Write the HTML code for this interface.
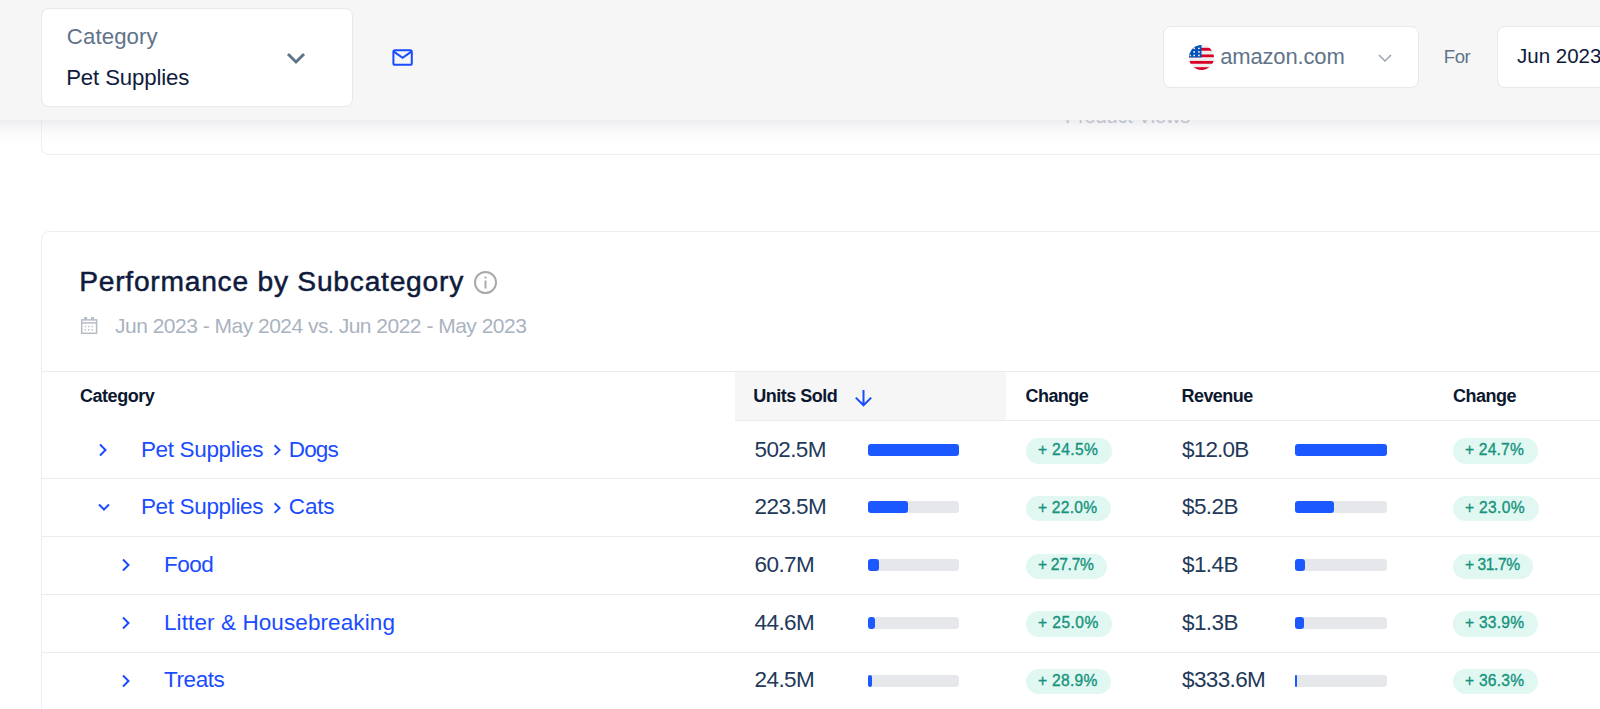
<!DOCTYPE html>
<html><head><meta charset="utf-8">
<style>
*{box-sizing:border-box;margin:0;padding:0}
html,body{width:1600px;height:709px;overflow:hidden;background:#fff;font-family:"Liberation Sans",sans-serif}
.abs{position:absolute}
.t{position:absolute;white-space:nowrap;line-height:1}
#card1{position:absolute;left:41px;top:-200px;width:1700px;height:355px;border:1px solid #eceef1;border-radius:8px;background:#fff}
#header{position:absolute;left:0;top:0;width:1600px;height:120px;background:#f6f6f6}
#shadow{position:absolute;left:0;top:120px;width:1600px;height:26px;background:linear-gradient(rgba(226,226,232,0.62) 0px,rgba(226,226,232,0.36) 6px,rgba(226,226,232,0.13) 14px,rgba(226,226,232,0) 26px)}
.box{position:absolute;background:#fff;border:1px solid #e7e9ec;border-radius:8px}
#card2{position:absolute;left:41px;top:231px;width:1700px;height:600px;border:1px solid #eceef1;border-radius:8px;background:#fff}
.row{position:absolute;left:42px;width:1600px;border-top:1px solid #ebebed}
.badge{position:absolute;height:25.4px;border-radius:12.7px;background:#e1f8f2}
.bar{position:absolute;height:12px;border-radius:3px;background:#e5e7ea}
.bar i{position:absolute;left:0;top:0;height:12px;border-radius:3px;background:#1c58ff}
</style></head><body>
<div id="card1"></div>
<div id="card2"></div>
<!-- table header bg -->
<div class="abs" style="left:42px;top:371px;width:1600px;height:1px;background:#ebebed"></div>
<div class="abs" style="left:735px;top:420px;width:900px;height:1px;background:#ebebed"></div>
<div class="abs" style="left:735px;top:372px;width:271px;height:48px;background:#f6f6f6"></div>
<svg class="abs" style="left:854px;top:388px" width="19" height="20" viewBox="0 0 19 20"><path d="M9.5 2 V17 M1.8 9.6 L9.5 17.3 L17.2 9.6" fill="none" stroke="#1a4cff" stroke-width="2"/></svg>
<svg class="abs" style="left:473px;top:270px" width="25" height="25" viewBox="0 0 25 25"><circle cx="12.5" cy="12.5" r="10.5" fill="none" stroke="#a9a9a9" stroke-width="2"/><rect x="11.5" y="10.5" width="2" height="8" fill="#a9a9a9"/><rect x="11.5" y="6.5" width="2" height="2" fill="#a9a9a9"/></svg>
<svg class="abs" style="left:80px;top:316px" width="19" height="20" viewBox="0 0 19 20"><g fill="none" stroke="#b4bcc6" stroke-width="1.5"><rect x="1.7" y="3.9" width="14.9" height="13.4"/><path d="M1.7 6.9 H16.6"/></g><g fill="#b4bcc6"><rect x="4.1" y="1" width="2.9" height="2.6"/><rect x="11" y="1" width="2.9" height="2.6"/><rect x="4.7" y="9.8" width="1.4" height="1.4"/><rect x="8.1" y="9.8" width="1.4" height="1.4"/><rect x="11.6" y="9.8" width="1.4" height="1.4"/><rect x="4.7" y="13.1" width="1.4" height="1.4"/><rect x="8.1" y="13.1" width="1.4" height="1.4"/><rect x="11.6" y="13.1" width="1.4" height="1.4"/></g></svg>
<div class="abs" style="left:42px;top:478px;width:1600px;height:1px;background:#ebebed"></div>
<svg class="abs" style="left:96px;top:441.90px" width="14" height="16" viewBox="0 0 14 16"><path d="M4 2.5 L9.5 8 L4 13.5" fill="none" stroke="#1a4cff" stroke-width="2"/></svg>
<svg class="abs" style="left:272px;top:444.00px" width="11" height="12" viewBox="0 0 11 12"><path d="M2.6 1.3 L7.6 6.1 L2.6 10.9" fill="none" stroke="#1a4cff" stroke-width="1.9"/></svg>
<div class="bar" style="left:868px;top:443.90px;width:91.4px"><i style="width:91px"></i></div>
<div class="bar" style="left:1295.3px;top:443.90px;width:91.3px"><i style="width:91.3px"></i></div>
<div class="abs" style="left:42px;top:536px;width:1600px;height:1px;background:#ebebed"></div>
<svg class="abs" style="left:96px;top:501.40px" width="16" height="12" viewBox="0 0 16 12"><path d="M3 3.5 L8 8.5 L13 3.5" fill="none" stroke="#1a4cff" stroke-width="2"/></svg>
<svg class="abs" style="left:272px;top:501.50px" width="11" height="12" viewBox="0 0 11 12"><path d="M2.6 1.3 L7.6 6.1 L2.6 10.9" fill="none" stroke="#1a4cff" stroke-width="1.9"/></svg>
<div class="bar" style="left:868px;top:501.40px;width:91.4px"><i style="width:40px"></i></div>
<div class="bar" style="left:1295.3px;top:501.40px;width:91.3px"><i style="width:39.2px"></i></div>
<div class="abs" style="left:42px;top:594px;width:1600px;height:1px;background:#ebebed"></div>
<svg class="abs" style="left:119px;top:557.00px" width="14" height="16" viewBox="0 0 14 16"><path d="M4 2.5 L9.5 8 L4 13.5" fill="none" stroke="#1a4cff" stroke-width="2"/></svg>
<div class="bar" style="left:868px;top:559.00px;width:91.4px"><i style="width:11px"></i></div>
<div class="bar" style="left:1295.3px;top:559.00px;width:91.3px"><i style="width:9.9px"></i></div>
<div class="abs" style="left:42px;top:652px;width:1600px;height:1px;background:#ebebed"></div>
<svg class="abs" style="left:119px;top:614.90px" width="14" height="16" viewBox="0 0 14 16"><path d="M4 2.5 L9.5 8 L4 13.5" fill="none" stroke="#1a4cff" stroke-width="2"/></svg>
<div class="bar" style="left:868px;top:616.90px;width:91.4px"><i style="width:7.3px"></i></div>
<div class="bar" style="left:1295.3px;top:616.90px;width:91.3px"><i style="width:8.8px"></i></div>
<div class="abs" style="left:42px;top:800px;width:1600px;height:1px;background:#ebebed"></div>
<svg class="abs" style="left:119px;top:672.60px" width="14" height="16" viewBox="0 0 14 16"><path d="M4 2.5 L9.5 8 L4 13.5" fill="none" stroke="#1a4cff" stroke-width="2"/></svg>
<div class="bar" style="left:868px;top:674.60px;width:91.4px"><i style="width:4px"></i></div>
<div class="bar" style="left:1295.3px;top:674.60px;width:91.3px"><i style="width:2.2px"></i></div>
<div class="t" style="left:1065.00px;top:106.00px;font-size:20px;color:#8f99a6;font-weight:normal;letter-spacing:-0.191px;">Product Views</div>
<div class="t" style="left:79.20px;top:267.00px;font-size:28.2px;color:#0f1b3d;font-weight:normal;letter-spacing:0.759px;-webkit-text-stroke:0.5px #0f1b3d">Performance by Subcategory</div>
<div class="t" style="left:115.00px;top:315.00px;font-size:21px;color:#a9b3bf;font-weight:normal;letter-spacing:-0.505px;">Jun 2023 - May 2024 vs. Jun 2022 - May 2023</div>
<div class="t" style="left:80.00px;top:387.00px;font-size:18px;color:#0c1830;font-weight:bold;letter-spacing:-0.466px;">Category</div>
<div class="t" style="left:753.20px;top:387.00px;font-size:18px;color:#0c1830;font-weight:bold;letter-spacing:-0.500px;">Units Sold</div>
<div class="t" style="left:1025.60px;top:387.00px;font-size:18px;color:#0c1830;font-weight:bold;letter-spacing:-0.586px;">Change</div>
<div class="t" style="left:1181.50px;top:387.00px;font-size:18px;color:#0c1830;font-weight:bold;letter-spacing:-0.564px;">Revenue</div>
<div class="t" style="left:1452.90px;top:387.00px;font-size:18px;color:#0c1830;font-weight:bold;letter-spacing:-0.469px;">Change</div>
<div class="t" style="left:140.90px;top:438.50px;font-size:22.5px;color:#1a4cff;font-weight:normal;letter-spacing:-0.337px;">Pet Supplies</div>
<div class="t" style="left:288.80px;top:438.50px;font-size:22.5px;color:#1a4cff;font-weight:normal;letter-spacing:-0.858px;">Dogs</div>
<div class="t" style="left:754.50px;top:438.50px;font-size:22.5px;color:#23395a;font-weight:normal;letter-spacing:-0.627px;">502.5M</div>
<div class="badge" style="left:1025.5px;top:438.40px;width:86.40px"></div>
<div class="t" style="left:1037.90px;top:442.10px;font-size:15.6px;color:#17937d;font-weight:normal;letter-spacing:0.392px;-webkit-text-stroke:0.35px #17937d">+ 24.5%</div>
<div class="t" style="left:1182.00px;top:438.50px;font-size:22.5px;color:#23395a;font-weight:normal;letter-spacing:-0.819px;">$12.0B</div>
<div class="badge" style="left:1452.5px;top:438.40px;width:85.00px"></div>
<div class="t" style="left:1465.00px;top:442.10px;font-size:15.6px;color:#17937d;font-weight:normal;letter-spacing:0.192px;-webkit-text-stroke:0.35px #17937d">+ 24.7%</div>
<div class="t" style="left:140.90px;top:496.00px;font-size:22.5px;color:#1a4cff;font-weight:normal;letter-spacing:-0.337px;">Pet Supplies</div>
<div class="t" style="left:288.80px;top:496.00px;font-size:22.5px;color:#1a4cff;font-weight:normal;letter-spacing:-0.166px;">Cats</div>
<div class="t" style="left:754.50px;top:496.00px;font-size:22.5px;color:#23395a;font-weight:normal;letter-spacing:-0.563px;">223.5M</div>
<div class="badge" style="left:1025.5px;top:495.90px;width:85.50px"></div>
<div class="t" style="left:1037.90px;top:499.60px;font-size:15.6px;color:#17937d;font-weight:normal;letter-spacing:0.263px;-webkit-text-stroke:0.35px #17937d">+ 22.0%</div>
<div class="t" style="left:1182.00px;top:496.00px;font-size:22.5px;color:#23395a;font-weight:normal;letter-spacing:-0.588px;">$5.2B</div>
<div class="badge" style="left:1452.5px;top:495.90px;width:86.00px"></div>
<div class="t" style="left:1465.00px;top:499.60px;font-size:15.6px;color:#17937d;font-weight:normal;letter-spacing:0.335px;-webkit-text-stroke:0.35px #17937d">+ 23.0%</div>
<div class="t" style="left:164.00px;top:553.60px;font-size:22.5px;color:#1a4cff;font-weight:normal;letter-spacing:-0.513px;">Food</div>
<div class="t" style="left:754.50px;top:553.60px;font-size:22.5px;color:#23395a;font-weight:normal;letter-spacing:-0.563px;">60.7M</div>
<div class="badge" style="left:1025.5px;top:553.50px;width:81.80px"></div>
<div class="t" style="left:1037.90px;top:557.20px;font-size:15.6px;color:#17937d;font-weight:normal;letter-spacing:-0.265px;-webkit-text-stroke:0.35px #17937d">+ 27.7%</div>
<div class="t" style="left:1182.00px;top:553.60px;font-size:22.5px;color:#23395a;font-weight:normal;letter-spacing:-0.588px;">$1.4B</div>
<div class="badge" style="left:1452.5px;top:553.50px;width:80.60px"></div>
<div class="t" style="left:1465.00px;top:557.20px;font-size:15.6px;color:#17937d;font-weight:normal;letter-spacing:-0.437px;-webkit-text-stroke:0.35px #17937d">+ 31.7%</div>
<div class="t" style="left:164.00px;top:611.50px;font-size:22.5px;color:#1a4cff;font-weight:normal;letter-spacing:0.096px;">Litter &amp; Housebreaking</div>
<div class="t" style="left:754.50px;top:611.50px;font-size:22.5px;color:#23395a;font-weight:normal;letter-spacing:-0.563px;">44.6M</div>
<div class="badge" style="left:1025.5px;top:611.40px;width:86.90px"></div>
<div class="t" style="left:1037.90px;top:615.10px;font-size:15.6px;color:#17937d;font-weight:normal;letter-spacing:0.463px;-webkit-text-stroke:0.35px #17937d">+ 25.0%</div>
<div class="t" style="left:1182.00px;top:611.50px;font-size:22.5px;color:#23395a;font-weight:normal;letter-spacing:-0.588px;">$1.3B</div>
<div class="badge" style="left:1452.5px;top:611.40px;width:85.30px"></div>
<div class="t" style="left:1465.00px;top:615.10px;font-size:15.6px;color:#17937d;font-weight:normal;letter-spacing:0.235px;-webkit-text-stroke:0.35px #17937d">+ 33.9%</div>
<div class="t" style="left:164.00px;top:669.20px;font-size:22.5px;color:#1a4cff;font-weight:normal;letter-spacing:-0.420px;">Treats</div>
<div class="t" style="left:754.50px;top:669.20px;font-size:22.5px;color:#23395a;font-weight:normal;letter-spacing:-0.563px;">24.5M</div>
<div class="badge" style="left:1025.5px;top:669.10px;width:85.90px"></div>
<div class="t" style="left:1037.90px;top:672.80px;font-size:15.6px;color:#17937d;font-weight:normal;letter-spacing:0.321px;-webkit-text-stroke:0.35px #17937d">+ 28.9%</div>
<div class="t" style="left:1182.00px;top:669.20px;font-size:22.5px;color:#23395a;font-weight:normal;letter-spacing:-0.625px;">$333.6M</div>
<div class="badge" style="left:1452.5px;top:669.10px;width:85.30px"></div>
<div class="t" style="left:1465.00px;top:672.80px;font-size:15.6px;color:#17937d;font-weight:normal;letter-spacing:0.235px;-webkit-text-stroke:0.35px #17937d">+ 36.3%</div>
<div id="header"></div>
<div id="shadow"></div>
<div class="box" style="left:41px;top:8px;width:312px;height:99px"></div>
<svg class="abs" style="left:284px;top:48.8px" width="24" height="18" viewBox="0 0 24 18"><path d="M4 5 L12 13 L20 5" fill="none" stroke="#5f7389" stroke-width="3"/></svg>
<svg class="abs" style="left:391px;top:48px" width="23" height="19" viewBox="0 0 23 19"><rect x="2.4" y="2.2" width="18.4" height="14.6" rx="1.6" fill="none" stroke="#1a4cff" stroke-width="2"/><path d="M2.8 3.6 L11.6 9.8 L20.4 3.6" fill="none" stroke="#1a4cff" stroke-width="2"/></svg>
<div class="box" style="left:1163px;top:26px;width:256px;height:62px"></div>
<svg class="abs" style="left:1189px;top:45px" width="25" height="25" viewBox="0 0 24 24"><defs><clipPath id="cc"><circle cx="12" cy="12" r="12"/></clipPath></defs><g clip-path="url(#cc)"><rect width="24" height="24" fill="#eee"/><rect y="2.7" width="24" height="2.8" fill="#d80027"/><rect y="9.1" width="24" height="2.6" fill="#d80027"/><rect y="15.3" width="24" height="2.7" fill="#d80027"/><rect y="21.3" width="24" height="2.7" fill="#d80027"/><rect width="12" height="12" fill="#0052b4"/><g fill="#f0f0f0"><circle cx="5" cy="3.2" r="0.9"/><circle cx="9.5" cy="3.2" r="0.9"/><circle cx="5" cy="6.6" r="0.9"/><circle cx="9.5" cy="6.6" r="0.9"/><circle cx="5" cy="10" r="0.9"/><circle cx="9.5" cy="10" r="0.9"/><circle cx="1.2" cy="10" r="0.8"/></g></g></svg>
<svg class="abs" style="left:1377px;top:52px" width="16" height="12" viewBox="0 0 16 12"><path d="M2 3 L8 9 L14 3" fill="none" stroke="#9aa5b1" stroke-width="1.5"/></svg>
<div class="box" style="left:1497px;top:26px;width:200px;height:62px"></div>
<div class="t" style="left:66.80px;top:26.00px;font-size:22.2px;color:#5f7389;font-weight:normal;letter-spacing:0.121px;">Category</div>
<div class="t" style="left:66.20px;top:67.00px;font-size:22.2px;color:#0f1b3d;font-weight:normal;letter-spacing:-0.132px;">Pet Supplies</div>
<div class="t" style="left:1220.20px;top:46.00px;font-size:22px;color:#5f7389;font-weight:normal;letter-spacing:-0.155px;">amazon.com</div>
<div class="t" style="left:1443.80px;top:48.30px;font-size:18.5px;color:#5f7389;font-weight:normal;letter-spacing:-0.417px;">For</div>
<div class="t" style="left:1517.00px;top:46.30px;font-size:20.5px;color:#0f1b3d;font-weight:normal;letter-spacing:0.000px;">Jun 2023</div>
</body></html>
